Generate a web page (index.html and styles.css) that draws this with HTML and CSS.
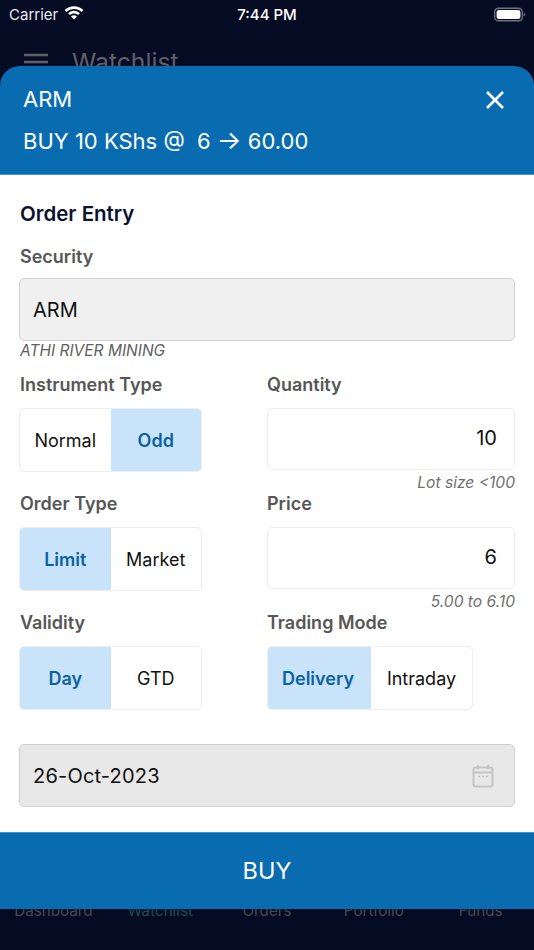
FILE: index.html
```html
<!DOCTYPE html>
<html lang="en">
<head>
<meta charset="utf-8">
<title>Order Entry</title>
<link rel="stylesheet" href="styles.css">
</head>
<body>
<div class="app">
  <div class="status">
    <div class="status-left">
      <span>Carrier</span>
      <svg class="wifi" viewBox="0 0 20 15" width="20" height="15"><path d="M10 1.2C6.4 1.2 3.1 2.6.6 5l1.800 1.900C4.400 5 7.100 3.900 10 3.900s5.600 1.100 7.600 3L19.400 5C16.900 2.600 13.600 1.200 10 1.200z" fill="#fff"/><path d="M10 5.800c-2.300 0-4.300.9-5.900 2.400l1.900 1.900C7 9 8.400 8.500 10 8.500s3 .5 4 1.600l1.900-1.900C14.300 6.700 12.300 5.800 10 5.800z" fill="#fff"/><path d="M10 10.300c-1.100 0-2.100.4-2.900 1.200L10 14.500l2.900-3c-.8-.8-1.800-1.200-2.900-1.200z" fill="#fff"/></svg>
    </div>
    <div class="status-time">7:44 PM</div>
    <svg class="battery" viewBox="0 0 32 15" width="32" height="15"><rect x=".75" y="1.25" width="27.5" height="12.5" rx="3.6" fill="none" stroke="#6f7380" stroke-width="1.3"/><rect x="2.6" y="3" width="23.8" height="9" rx="2.2" fill="#fff"/><path d="M29.6 5.500v4c.8-.3 1.300-1.100 1.300-2s-.5-1.700-1.300-2z" fill="#6f7380"/></svg>
  </div>
  <div class="topbar">
    <svg class="menu" viewBox="0 0 24 18" width="24" height="18"><path d="M0 2h24M0 9h24M0 16h24" stroke="#5f6067" stroke-width="2.600"/></svg>
    <span class="topbar-title">Watchlist</span>
  </div>
  <div class="tabs">
    <span>Dashboard</span><span class="tab-active">Watchlist</span><span>Orders</span><span>Portfolio</span><span>Funds</span>
  </div>

  <div class="sheet">
    <header class="sheet-head">
      <div class="head-row">
        <span>ARM</span>
        <svg class="close" viewBox="0 0 20 20" width="20" height="20"><path d="M2 2l16 16M18 2L2 18" stroke="#fff" stroke-width="2.600"/></svg>
      </div>
      <div class="head-summary">BUY 10 KShs @&nbsp; 6 <span class="arrow">→</span> 60.00</div>
    </header>

    <main class="form">
      <h2 class="form-title">Order Entry</h2>
      <div class="label">Security</div>
      <div class="field field-grey">ARM</div>
      <div class="company">ATHI RIVER MINING</div>

      <div class="grid">
        <div class="cell">
          <div class="label">Instrument Type</div>
          <div class="toggle">
            <span class="opt">Normal</span><span class="opt opt-on">Odd</span>
          </div>
        </div>
        <div class="cell">
          <div class="label">Quantity</div>
          <div class="field-num">10</div>
          <div class="hint">Lot size &lt;100</div>
        </div>
        <div class="cell">
          <div class="label">Order Type</div>
          <div class="toggle">
            <span class="opt opt-on">Limit</span><span class="opt">Market</span>
          </div>
        </div>
        <div class="cell">
          <div class="label">Price</div>
          <div class="field-num">6</div>
          <div class="hint">5.00 to 6.10</div>
        </div>
        <div class="cell">
          <div class="label">Validity</div>
          <div class="toggle">
            <span class="opt opt-on">Day</span><span class="opt">GTD</span>
          </div>
        </div>
        <div class="cell">
          <div class="label">Trading Mode</div>
          <div class="toggle toggle-wide">
            <span class="opt opt-on">Delivery</span><span class="opt">Intraday</span>
          </div>
        </div>
      </div>

      <div class="field-date">
        <span>26-Oct-2023</span>
        <svg viewBox="0 0 22 24" width="22" height="24"><path d="M6 1v4M16 1v4" stroke="#c4c4c4" stroke-width="2"/><rect x="1.500" y="3.500" width="19" height="19" rx="2" fill="none" stroke="#c4c4c4" stroke-width="2"/><path d="M1.500 8.500h19" stroke="#c4c4c4" stroke-width="2"/><path d="M6 12.500h2M10 12.500h2M14 12.500h2" stroke="#c4c4c4" stroke-width="1.600"/></svg>
      </div>
    </main>

    <button class="buy">BUY</button>
  </div>
</div>
</body>
</html>
```

FILE: styles.css
```css
* { box-sizing: border-box; }
html, body { margin: 0; padding: 0; }
body { font-family: Inter, "Liberation Sans", sans-serif; background: #060b24; }

.app {
  position: relative;
  width: 534px;
  height: 950px;
  overflow: hidden;
  background: #060b24;
  display: flex;
  flex-direction: column;
}

.status {
  height: 28px;
  padding: 0 8px 0 9px;
  display: flex;
  align-items: center;
  justify-content: space-between;
  color: #fff;
  font-size: 15px;
  position: relative;
}
.status-left { display: flex; align-items: center; gap: 6px; color: #ececf0; }
.wifi { margin-top: -4px; }
.status-time { position: absolute; left: 0; right: 0; text-align: center; font-weight: 500; }

.topbar {
  margin-top: 17px;
  padding-left: 24px;
  display: flex;
  align-items: center;
  gap: 24px;
  height: 34px;
}
.menu { flex: none; }
.topbar-title { font-size: 24.700px; color: #5f6067; }

.tabs {
  margin-top: auto;
  margin-bottom: 30px;
  display: grid;
  grid-template-columns: repeat(5, 1fr);
  text-align: center;
  font-size: 15.200px;
  color: #46484f;
}
.tab-active { color: #1f4a55; }

.sheet {
  position: absolute;
  left: 0;
  right: 0;
  top: 66px;
  bottom: 41px;
  display: flex;
  flex-direction: column;
  border-radius: 20px 20px 0 0;
  overflow: hidden;
}

.sheet-head {
  height: 109px;
  padding: 18px 29px 0 23px;
  background: #0a6cb0;
  border-bottom: 1px solid #3f95d0;
  color: #fff;
}
.head-row {
  display: flex;
  align-items: center;
  justify-content: space-between;
  font-size: 22px;
  line-height: 30px;
}
.close { margin-top: 1px; }
.head-summary { margin-top: 12px; font-size: 22px; line-height: 30px; }
.arrow { font-size: 26px; line-height: 1; }

.form { flex: 1; padding: 27px 19px 0; background: #fff; }
.form-title {
  margin: 0 0 20px 1px;
  font-size: 20.500px;
  line-height: 24px;
  font-weight: 600;
  color: #0d1130;
}
.label {
  margin-left: 1px;
  font-size: 18px;
  line-height: 22px;
  font-weight: 600;
  color: #565656;
}
.field {
  margin-top: 10px;
  height: 63px;
  padding: 0 13px;
  display: flex;
  align-items: center;
  border: 1.500px solid #d0d0d0;
  border-radius: 5px;
  font-size: 20px;
  color: #111;
}
.field-grey { background: #f0f0f0; }
.company {
  margin: 1px 0 0 1px;
  font-size: 15.500px;
  line-height: 18px;
  font-style: italic;
  color: #606060;
}

.grid {
  margin-top: 14px;
  display: grid;
  grid-template-columns: 248px 248px;
  row-gap: 1px;
}
.grid .cell:nth-child(even) .label { margin-left: 0; }

.toggle {
  margin-top: 12px;
  width: 183px;
  height: 64px;
  display: grid;
  grid-template-columns: 1fr 1fr;
  border: 1px solid #eeeeee;
  border-radius: 5px;
  overflow: hidden;
}
.toggle-wide {
  width: 206px;
  grid-template-columns: 103px 1fr;
}
.toggle-wide .opt-on { padding-right: 3px; }
.opt {
  display: flex;
  align-items: center;
  justify-content: center;
  font-size: 18px;
  color: #111;
}
.opt-on {
  background: #c9e3fa;
  color: #0a62a3;
  font-weight: 600;
}

.field-num {
  margin-top: 12px;
  width: 248px;
  height: 62px;
  padding: 0 17px 2px;
  display: flex;
  align-items: center;
  justify-content: flex-end;
  border: 1px solid #eeeeee;
  border-radius: 5px;
  font-size: 20px;
  color: #111;
}
.hint {
  margin-top: 4px;
  text-align: right;
  font-size: 15.600px;
  line-height: 18px;
  font-style: italic;
  color: #707070;
}

.field-date {
  margin-top: 34px;
  height: 63px;
  padding: 0 20px 0 13px;
  display: flex;
  align-items: center;
  justify-content: space-between;
  background: #e8e8e8;
  border: 1.500px solid #d0d0d0;
  border-radius: 5px;
  font-size: 20px;
  letter-spacing: 0.2px;
  color: #111;
}

.buy {
  height: 77px;
  border: 0;
  border-top: 1px solid #3f8fc8;
  padding: 0 0 2px;
  background: #0a6cb0;
  color: #fff;
  font: 400 23.500px Inter, "Liberation Sans", sans-serif;
}
```
